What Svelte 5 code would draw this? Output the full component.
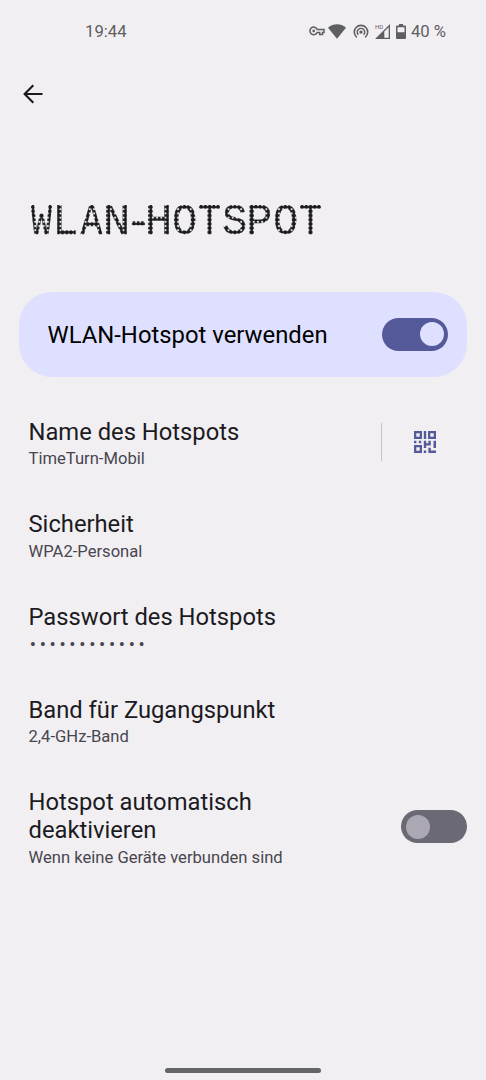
<script lang="ts">
	// width correction and shift per letter, so that the stems sit on the dot columns
	const title = [
		['W', 0.82, 0],
		['L', 1, -1],
		['A', 0.84, 0],
		['N', 1.07, 0],
		['-', 1.2, 0],
		['H', 1.07, 0],
		['O', 0.97, 0],
		['T', 0.9, 0],
		['S', 0.97, 0],
		['P', 1, -0.9],
		['O', 0.97, 0],
		['T', 0.9, 0]
	] as const;

	let hotspotOn = $state(true);
	let autoOff = $state(false);
</script>

<div class="screen">
	<header class="status-bar">
		<time>19:44</time>
		<div class="status-icons">
			<svg class="key" width="16" height="10" viewBox="0 0 16 10" fill="none" stroke="currentColor" stroke-width="1.5">
				<path d="M8.2 3.4H15V6.4H13.5V8.5H10.7V6.4H8.2A3.8 3.8 0 1 1 8.2 3.4Z" />
				<circle cx="4.7" cy="4.9" r="1.3" fill="currentColor" stroke="none" />
			</svg>
			<svg class="wifi" width="18" height="15" viewBox="0 0 18 15" fill="currentColor">
				<path d="M9 14.8L0 3.7C5.2-.8 12.8-.8 18 3.7Z" />
			</svg>
			<svg class="hotspot" width="16" height="15" viewBox="0 0 16 15" fill="none" stroke="currentColor" stroke-width="1.6">
				<path d="M3.8 13.3A6.7 6.7 0 1 1 12.2 13.3M5.3 10.7A3.7 3.7 0 1 1 10.7 10.7" />
				<circle cx="8" cy="8.1" r="1.7" fill="currentColor" stroke="none" />
			</svg>
			<div class="signal">
				<span>HD</span>
				<svg width="15" height="15" viewBox="0 0 15 15" fill="currentColor">
					<path d="M15 0V15H0ZM13.7 3.2L9.3 7.6V13.7H13.7Z" fill-rule="evenodd" />
				</svg>
			</div>
			<svg class="battery" width="10" height="15" viewBox="0 0 10 15" fill="currentColor">
				<path d="M3 0H7V1.6H9Q10 1.6 10 2.6V14Q10 15 9 15H1Q0 15 0 14V2.6Q0 1.6 1 1.6H3ZM1.5 3.2V8.3H8.5V3.2Z" fill-rule="evenodd" />
			</svg>
			<span class="percent">40 %</span>
		</div>
	</header>

	<button class="back" aria-label="Zurück">
		<svg width="20" height="20" viewBox="0 0 20 20" fill="none" stroke="currentColor" stroke-width="2.1">
			<path d="M19.5 10H2M10.3 1.2L1.6 10L10.3 18.8" />
		</svg>
	</button>

	<h1>{#each title as [letter, scale, shift]}<span class:dash={letter === '-'} style:transform="translateX({shift}px) scaleX({scale})">{letter}</span>{/each}</h1>

	<section class="main-switch">
		<span>WLAN-Hotspot verwenden</span>
		<button class="switch" class:on={hotspotOn} role="switch" aria-checked={hotspotOn} aria-label="WLAN-Hotspot verwenden" onclick={() => (hotspotOn = !hotspotOn)}></button>
	</section>

	<main>
		<div class="row">
			<div class="text">
				<h2>Name des Hotspots</h2>
				<p>TimeTurn-Mobil</p>
			</div>
			<button class="qr" aria-label="QR-Code">
				<svg width="22" height="22" viewBox="0 0 22 22" fill="currentColor">
					<path d="M0 0H8V8H0ZM2.3 2.3V5.7H5.7V2.3ZM14 0H22V8H14ZM16.3 2.3V5.7H19.7V2.3ZM0 14H8V22H0ZM2.3 16.3V19.7H5.7V16.3Z" fill-rule="evenodd" />
					<path d="M9.8 0H12.2V8H9.8ZM0 9.8H2.4V12.2H0ZM4.8 9.8H7.2V12.2H4.8ZM9.8 9.8H12.2V12.2H14.4V9.8H16.8V14.4H12.2V17H9.8ZM19.5 9.8H22V17H19.5ZM9.8 19.5H12.2V22H9.8ZM14.4 16.8H16.8V19.5H22V22H14.4Z" />
				</svg>
			</button>
		</div>

		<div class="row">
			<div class="text">
				<h2>Sicherheit</h2>
				<p>WPA2-Personal</p>
			</div>
		</div>

		<div class="row">
			<div class="text">
				<h2>Passwort des Hotspots</h2>
				<p class="password">••••••••••••</p>
			</div>
		</div>

		<div class="row">
			<div class="text">
				<h2>Band für Zugangspunkt</h2>
				<p>2,4-GHz-Band</p>
			</div>
		</div>

		<div class="row auto-off">
			<div class="text">
				<h2>Hotspot automatisch deaktivieren</h2>
				<p>Wenn keine Geräte verbunden sind</p>
			</div>
			<button class="switch" class:on={autoOff} role="switch" aria-checked={autoOff} aria-label="Hotspot automatisch deaktivieren" onclick={() => (autoOff = !autoOff)}></button>
		</div>
	</main>

	<div class="nav-handle"></div>
</div>

<style>
	:global(body) {
		background: #f2eff3;
	}

	.screen {
		display: flex;
		flex-direction: column;
		box-sizing: border-box;
		width: 486px;
		height: 1080px;
		overflow: hidden;
		background: #f2eff3;
		color: #1b1b1f;
		font-family: Roboto, sans-serif;
	}

	h1,
	h2,
	p {
		margin: 0;
		font-weight: 400;
	}

	button {
		padding: 0;
		border: 0;
		background: none;
		color: inherit;
	}

	svg {
		display: block;
	}

	.status-bar {
		display: flex;
		align-items: center;
		justify-content: space-between;
		height: 62px;
		padding: 0 40px 0 85px;
		color: #5f5e62;
		font-size: 16.7px;
		font-weight: 450;
	}

	.status-icons {
		display: flex;
		align-items: center;
	}

	.wifi {
		margin-left: 3px;
	}

	.hotspot {
		margin-left: 7px;
	}

	.signal {
		display: flex;
		align-items: flex-start;
		margin-left: 6px;
	}

	.signal span {
		width: 0;
		margin-top: -1px;
		font-size: 6px;
		line-height: 7px;
	}

	.battery {
		margin-left: 6px;
	}

	.percent {
		margin-left: 5px;
		white-space: nowrap;
	}

	.back {
		width: 20px;
		height: 20px;
		margin: 22px 0 0 23px;
	}

	/* dot-matrix lettering: the whole line is seen through a grid of dots */
	h1 {
		display: flex;
		align-self: flex-start;
		height: 29.51px;
		margin: 101.2px 0 0 30.5px;
		font-family: "Liberation Mono", monospace;
		font-size: 43.5px;
		line-height: 35px;
		mask: radial-gradient(circle at center, #000 1.8px, transparent 2.4px) 0 0 / 4.216px 4.216px;
	}

	h1 span {
		display: flex;
		justify-content: center;
		width: 21.08px;
		margin-right: 4.216px;
		-webkit-text-stroke: 0.3px #1b1b1f;
	}

	h1 .dash {
		width: 12.65px;
		font-family: "Liberation Sans", sans-serif;
		translate: 0 -1.6px;
	}

	.main-switch {
		display: flex;
		align-items: center;
		justify-content: space-between;
		height: 85px;
		margin: 57.3px 19px 0;
		padding: 0 19px 0 28.5px;
		box-sizing: border-box;
		border-radius: 33px;
		background: #dfe0ff;
		color: #000;
		font-size: 23.85px;
	}

	.main-switch span {
		padding-top: 2px;
	}

	.switch {
		display: flex;
		flex-shrink: 0;
		align-items: center;
		box-sizing: border-box;
		width: 66px;
		height: 33px;
		padding: 0 4.5px;
		border-radius: 17px;
		background: #6b6974;
	}

	.switch::before {
		content: "";
		width: 24px;
		height: 24px;
		border-radius: 50%;
		background: #aba8b4;
	}

	.switch.on {
		justify-content: flex-end;
		background: #545999;
	}

	.switch.on::before {
		background: #dfe0ff;
	}

	main {
		margin-top: 19px;
	}

	.row {
		display: flex;
		align-items: center;
		justify-content: space-between;
		height: 92.7px;
		padding: 0 19px 0 28.5px;
	}

	.text {
		padding-top: 2.4px;
	}

	h2 {
		font-size: 23.75px;
		line-height: 28px;
	}

	p {
		margin-top: 3.6px;
		color: #47464f;
		font-size: 16.6px;
		line-height: 20px;
	}

	.password {
		padding-left: 1.3px;
		font-size: 18.5px;
		letter-spacing: 3.65px;
	}

	.qr {
		display: flex;
		align-items: center;
		justify-content: center;
		width: 86px;
		height: 38px;
		border-left: 1px solid #c6c4ca;
		color: #545999;
	}

	.auto-off {
		height: 120px;
	}

	.auto-off .text {
		width: 290px;
		padding-top: 3px;
	}

	.nav-handle {
		width: 156px;
		height: 5px;
		margin: auto auto 7px;
		border-radius: 3px;
		background: #656468;
	}
</style>
